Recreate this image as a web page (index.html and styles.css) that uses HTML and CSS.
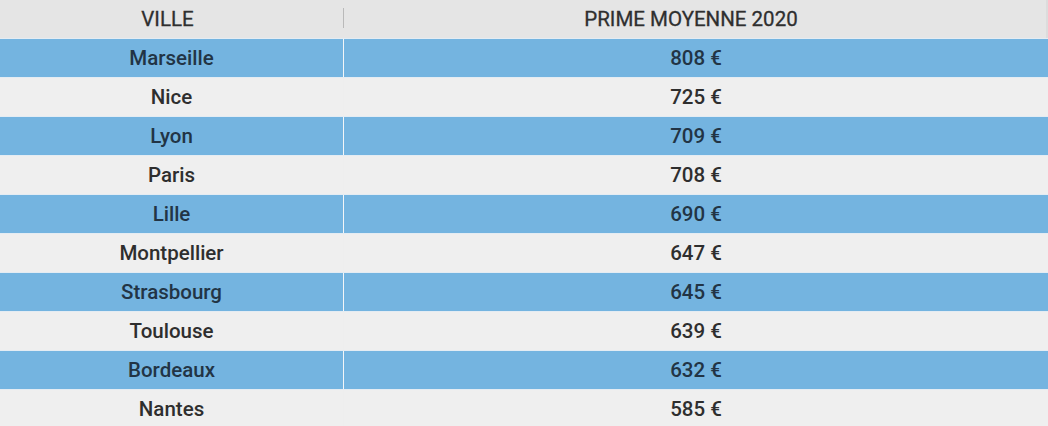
FILE: index.html
```html
<!DOCTYPE html>
<html lang="fr">
<head>
<meta charset="utf-8">
<link rel="stylesheet" href="styles.css">
</head>
<body>
<div class="table">
  <div class="row head"><div class="cell city">VILLE</div><div class="cell val">PRIME MOYENNE 2020</div></div>
  <div class="row blue"><div class="cell city">Marseille</div><div class="cell val">808 €</div></div>
  <div class="row light"><div class="cell city">Nice</div><div class="cell val">725 €</div></div>
  <div class="row blue"><div class="cell city">Lyon</div><div class="cell val">709 €</div></div>
  <div class="row light"><div class="cell city">Paris</div><div class="cell val">708 €</div></div>
  <div class="row blue"><div class="cell city">Lille</div><div class="cell val">690 €</div></div>
  <div class="row light"><div class="cell city">Montpellier</div><div class="cell val">647 €</div></div>
  <div class="row blue"><div class="cell city">Strasbourg</div><div class="cell val">645 €</div></div>
  <div class="row light"><div class="cell city">Toulouse</div><div class="cell val">639 €</div></div>
  <div class="row blue"><div class="cell city">Bordeaux</div><div class="cell val">632 €</div></div>
  <div class="row light"><div class="cell city">Nantes</div><div class="cell val">585 €</div></div>
</div>
</body>
</html>
```
FILE: styles.css
```css
html, body {
  margin: 0;
  padding: 0;
  background: #efefef;
  overflow: hidden;
}
.table {
  width: 1048px;
  font-family: Roboto, "Liberation Sans", sans-serif;
  font-size: 20.5px;
  font-weight: 500;
}
.row {
  display: grid;
  grid-template-columns: 343px 1px 1fr;
  height: 38px;
  border-top: 1px solid #e4ecf3;
}
.row .cell {
  display: flex;
  align-items: center;
  justify-content: center;
}
.row .city {
  grid-column: 1;
}
.row .val {
  grid-column: 3;
}
.row::after {
  content: "";
  grid-column: 2;
  grid-row: 1;
  background: #f4f6f8;
}
.head {
  height: 38px;
  border-top: none;
  background: #e5e5e5;
  color: #2f2f2f;
  font-weight: 400;
  font-size: 20.5px;
}
.head .city {
  padding-right: 8px;
  -webkit-text-stroke: 0.3px #2f2f2f;
}
.head .val {
  padding-right: 8px;
  border-right: 2px solid #dcdcdc;
  -webkit-text-stroke: 0.3px #2f2f2f;
}
.head::after {
  background: linear-gradient(#e5e5e5 0 8px, #b9b9b9 8px 28px, #e5e5e5 28px);
}
.blue {
  background: #74b4e0;
  color: #223445;
}
.light {
  background: #efefef;
  color: #2e2e2e;
}
.light::after {
  background: #eeeeee;
}
```
